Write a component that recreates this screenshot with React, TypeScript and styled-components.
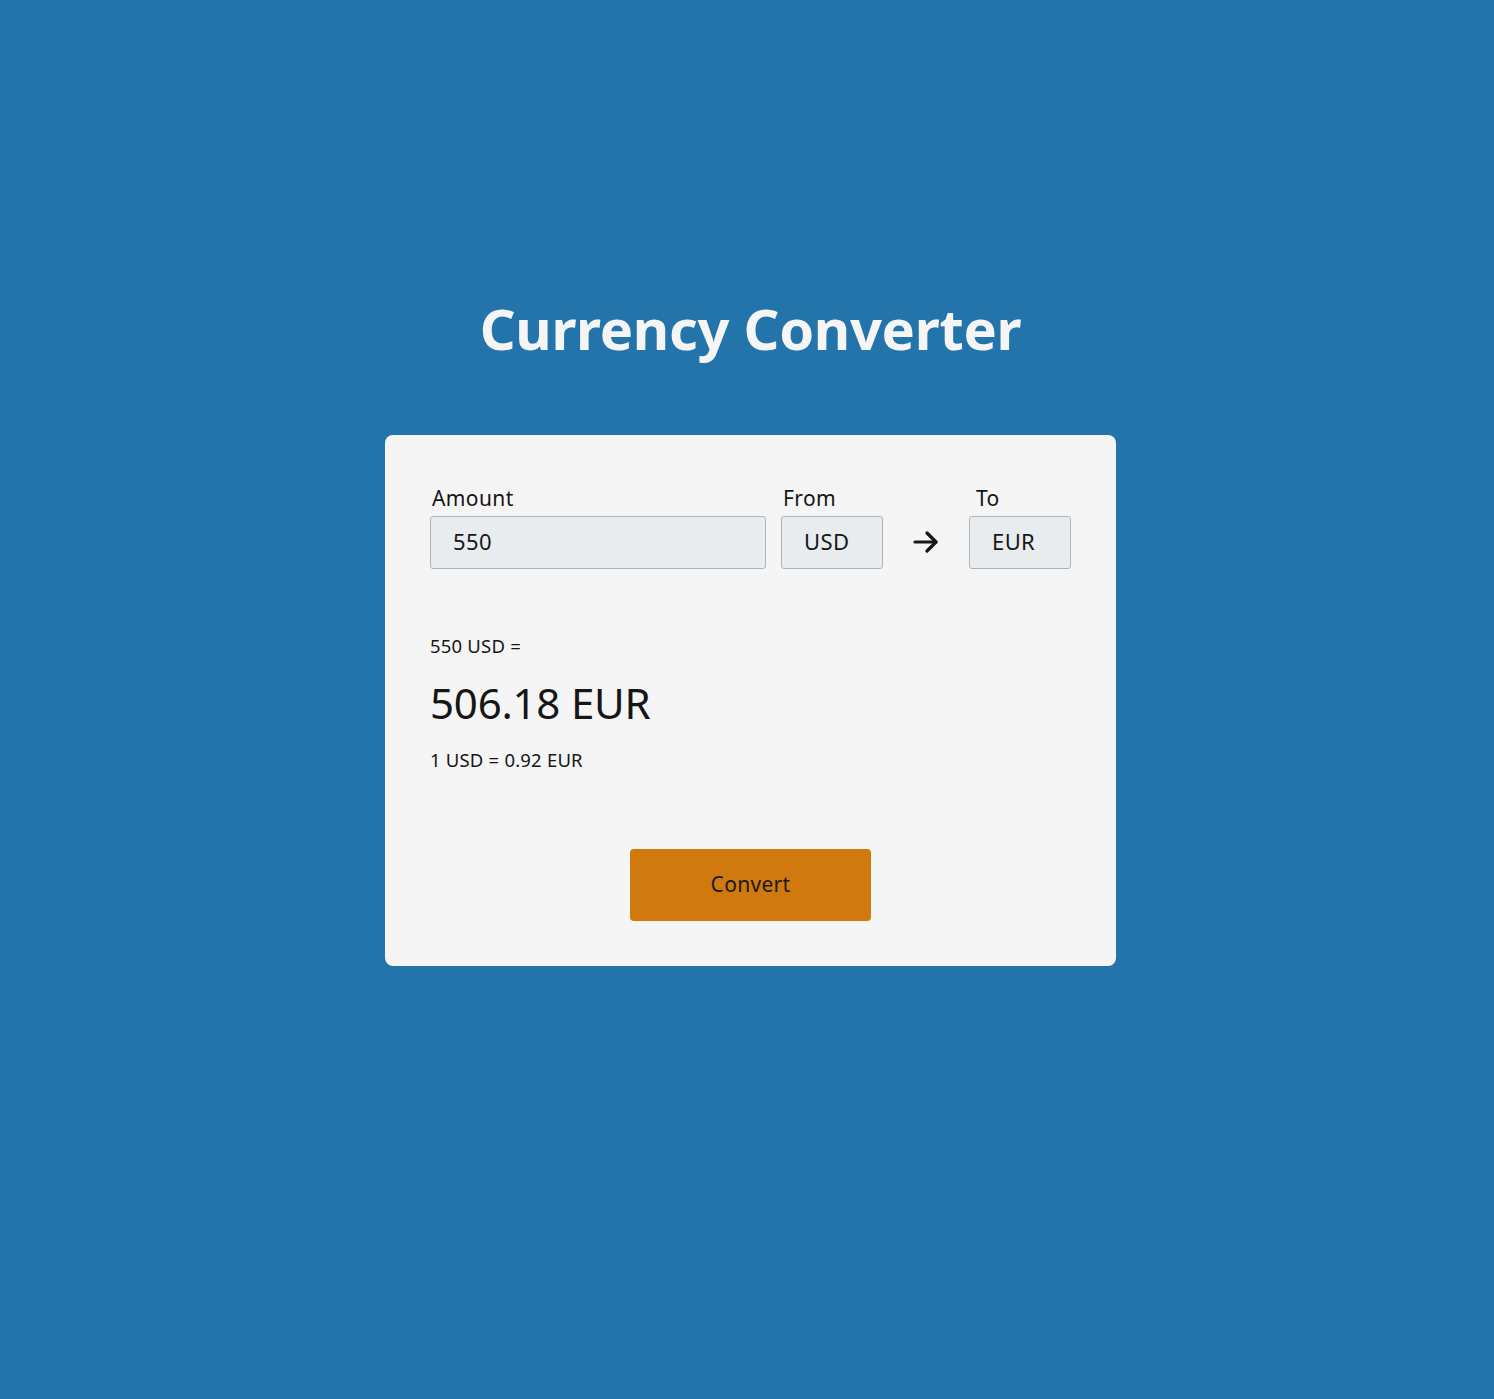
import React from "react";
import styled, { createGlobalStyle } from "styled-components";

const Global = createGlobalStyle`
  html, body { margin: 0; padding: 0; }
  body {
    background: #2374aa;
    font-family: "Noto Sans", "Open Sans", sans-serif;
    color: #161616;
  }
`;

const Page = styled.main`
  min-height: 1399px;
  display: flex;
  flex-direction: column;
  align-items: center;
  padding-top: 294px;
  padding-left: 7px;
  box-sizing: border-box;
`;

const Title = styled.h1`
  margin: 0;
  color: #f5f5f5;
  font-size: 56px;
  font-weight: 700;
  line-height: 68px;
  letter-spacing: -0.3px;
`;

const Card = styled.section`
  margin-top: 73px;
  width: 731px;
  box-sizing: border-box;
  background: #f5f5f5;
  border-radius: 8px;
  padding: 49px 45px 45px;
  display: flex;
  flex-direction: column;
`;

const Row = styled.div`
  display: grid;
  grid-template-columns: 336px 117px 86px 102px;
`;

const Field = styled.div<{ $gapLeft?: number }>`
  display: flex;
  flex-direction: column;
  margin-left: ${(p) => p.$gapLeft ?? 0}px;
`;

const Label = styled.label<{ $indent?: number }>`
  font-size: 21px;
  line-height: 28px;
  letter-spacing: 0.4px;
  margin-left: ${(p) => p.$indent ?? 2}px;
  margin-bottom: 4px;
  color: #161616;
`;

const Box = styled.div`
  height: 53px;
  box-sizing: border-box;
  background: #e9ecef;
  border: 1px solid #aeb4bc;
  border-radius: 3px;
  display: flex;
  align-items: center;
  padding-left: 22px;
  padding-bottom: 3px;
  font-size: 22px;
  letter-spacing: 0.4px;
  color: #161616;
`;

const ArrowCell = styled.div`
  display: flex;
  align-items: flex-end;
  justify-content: center;
  height: 100%;
  padding-bottom: 14px;
  box-sizing: border-box;
`;

const Result = styled.div`
  margin-top: 64px;
  display: flex;
  flex-direction: column;
`;

const Small = styled.p`
  margin: 0;
  font-size: 18.5px;
  line-height: 26px;
  letter-spacing: 0.2px;
`;

const Big = styled.p`
  margin: 18px 0 18px;
  font-size: 42px;
  line-height: 52px;
  letter-spacing: -0.2px;
`;

const ButtonRow = styled.div`
  display: flex;
  justify-content: center;
  margin-top: 76px;
`;

const Button = styled.button`
  width: 241px;
  height: 72px;
  border: none;
  border-radius: 4px;
  background: #d0790e;
  color: #1a1a1a;
  font-family: "Noto Sans", "Open Sans", sans-serif;
  font-size: 21px;
  letter-spacing: 0.3px;
  padding-bottom: 3px;
  cursor: pointer;
`;

export default function App() {
  return (
    <>
      <Global />
      <Page>
        <Title>Currency Converter</Title>
        <Card>
          <Row>
            <Field>
              <Label>Amount</Label>
              <Box>550</Box>
            </Field>
            <Field $gapLeft={15}>
              <Label>From</Label>
              <Box>USD</Box>
            </Field>
            <ArrowCell>
              <svg width="28" height="26" viewBox="0 0 28 26" fill="none" stroke="#161616" strokeWidth="3.2" strokeLinecap="round" strokeLinejoin="round">
                <path d="M3 13h21" />
                <path d="M15 4l9 9-9 9" />
              </svg>
            </ArrowCell>
            <Field>
              <Label $indent={7}>To</Label>
              <Box>EUR</Box>
            </Field>
          </Row>
          <Result>
            <Small>550 USD =</Small>
            <Big>506.18 EUR</Big>
            <Small>1 USD = 0.92 EUR</Small>
          </Result>
          <ButtonRow>
            <Button>Convert</Button>
          </ButtonRow>
        </Card>
      </Page>
    </>
  );
}
